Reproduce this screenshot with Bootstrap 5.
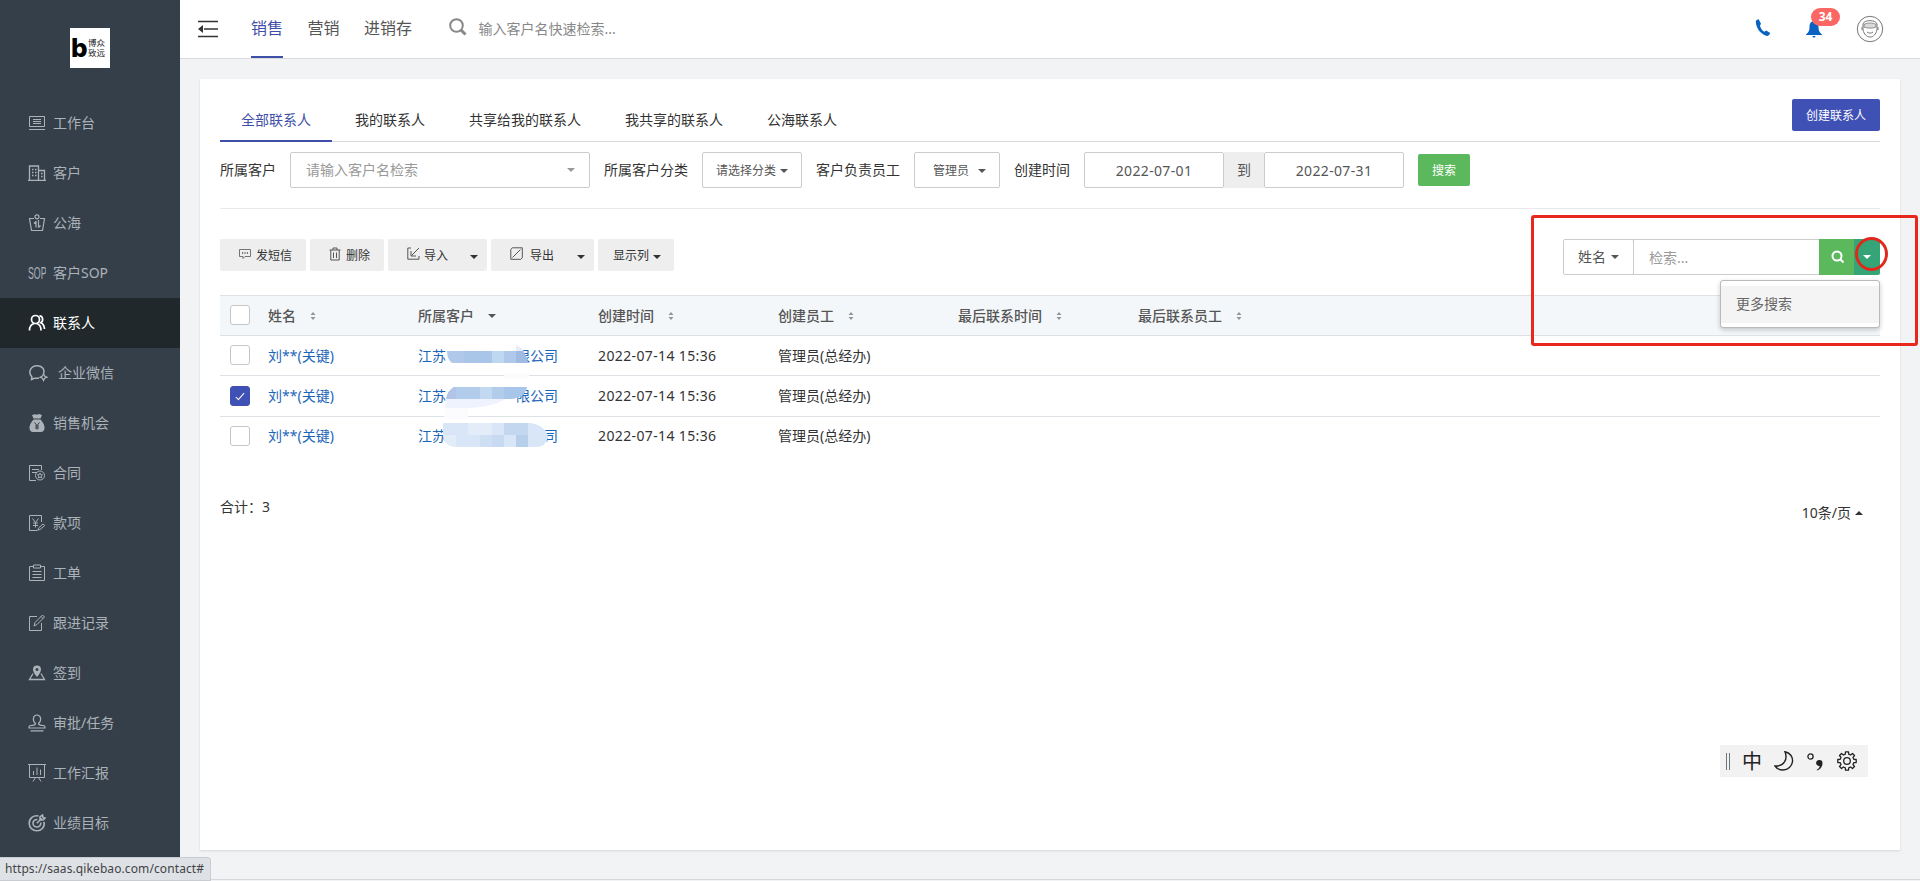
<!DOCTYPE html>
<html lang="zh-CN">
<head>
    <meta charset="UTF-8">
    <meta name="viewport" content="width=device-width, initial-scale=1.0">
    <title>联系人</title>
    <link href="https://cdn.jsdelivr.net/npm/bootstrap@5.3.2/dist/css/bootstrap.min.css" rel="stylesheet">
    <style>
        body{
            background: #f1f3f5;
            color: #333;
            font-family: "Noto Sans", "Noto Sans CJK SC", sans-serif;
            font-size: 14px;
            line-height: 20px;
            height: 881px;
            overflow: hidden;
        }
        svg{ display: block; flex: none; fill: none; stroke: currentColor; }
        .solid{ fill: currentColor; stroke: none; }
        a{ text-decoration: none; }

        /* sidebar */
        .side{ width: 180px; height: 881px; background: #353f4a; }
        .brand-box{ width: 40px; height: 40px; margin: 28px 0 30px 70px; background: #fff; color: #000; }
        .brand-b{ font: 800 26px/38px Inter, sans-serif; width: 18px; padding-left: 1px; }
        .brand-name{ font-size: 8.5px; line-height: 10px; white-space: nowrap; color: #222; }
        .side .nav-link{ height: 50px; padding: 0 0 0 28px; gap: 7px; color: #abb2b8; white-space: nowrap; }
        .side .nav-link.active{ background: #20282b; color: #fff; }
        .side .nav-link.wide-gap{ gap: 10px; }

        /* header */
        .top{ height: 59px; background: #fff; border-bottom: 1px solid #d9dcde; padding: 0 36px 0 18px; }
        .top .nav-link{ height: 58px; padding: 0; font-size: 16px; line-height: 57px; color: #555; margin-right: 24.5px; }
        .top .nav-link.active{ color: #3f4fa8; border-bottom: 2px solid #3f4fa8; }
        .top-nav{ margin-left: 17px; }
        .quick{ color: #888; }
        .blue-ico{ color: #0a63c2; }
        .phone{ margin-top: -3px; }
        .bell{ margin: 0 34px 0 35px; }
        .avatar{ color: #777; }
        .count{ left: 5px; top: -13px; width: 29px; height: 18px; border-radius: 9px; background: #fa6764; color: #fff; font-size: 12px; font-weight: 700; line-height: 18px; text-align: center; }

        /* panel */
        .panel{ margin: 20px 20px 0; width: 1700px; height: 771px; padding: 0 20px; background: #fff; box-shadow: 0 1px 2px rgba(0,0,0,.12); }
        .tabs{ height: 63px; border-bottom: 1px solid #d6d9db; }
        .tabs .nav-link{ height: 44px; padding: 0 21px; margin: 19px 2px 0 0; line-height: 43px; color: #333; border-bottom: 2px solid transparent; }
        .tabs .nav-link.active{ color: #3f4fa8; border-color: #3f4fa8; }
        .btn{ --bs-btn-font-size: 12px; --bs-btn-border-radius: 2px; height: 32px; padding: 1px 0 0; line-height: 20px; border: 0; }
        .btn-create{ width: 88px; margin-top: 20px; background: #3f51b5; color: #fff; }
        .btn-green{ width: 52px; margin: 2px 0 0 14px; background: #5cb85c; color: #fff; }
        .filters{ height: 67px; padding-top: 10px; border-bottom: 1px solid #e8eaec; }
        .filters label{ line-height: 36px; margin-right: 14px; height: 36px; }
        .box{ height: 36px; border: 1px solid #ccc; border-radius: 2px; background: #fff; display: flex; align-items: center; margin-right: 14px; color: #555; }
        .in-customer{ width: 300px; padding: 0 14px 0 15px; color: #999; }
        .in-category{ width: 100px; padding: 1px 0 0 13px; gap: 4px; font-size: 12px; }
        .in-owner{ width: 86px; padding: 1px 0 0 18px; gap: 9px; font-size: 12px; }
        .in-category .tri, .in-owner .tri{ margin-top: 1px; }
        .date-in{ width: 140px; justify-content: center; letter-spacing: .35px; margin: 0; padding-top: 1px; }
        .to{ width: 40px; height: 36px; background: #eee; color: #555; line-height: 36px; text-align: center; }
        .tri{ width: 0; height: 0; border: 4px solid transparent; border-top-color: currentColor; border-bottom: 0; }
        .tri.up{ border-bottom: 4px solid currentColor; border-top: 0; }

        .tools{ height: 86px; padding-top: 30px; gap: 4px; }
        .tools .btn-gray{ background: #eee; color: #333; display: flex; align-items: center; }
        .btn-gray svg{ color: #555; margin-top: -4px; }
        .btn-gray .tri{ margin-top: 3px; }
        .tools .w-sms{ width: 86px; padding-left: 19px; gap: 5px; }
        .tools .w-del{ width: 74px; padding-left: 19px; gap: 5px; }
        .tools .w-in{ width: 99px; padding: 1px 9px 0 19px; gap: 4px; }
        .tools .w-out{ width: 103px; padding: 1px 9px 0 19px; gap: 7px; }
        .tools .w-col{ width: 76px; padding-left: 15px; gap: 4px; }
        .search{ margin-left: auto; height: 36px; }
        .search .box{ margin: 0; }
        .search .in-field{ width: 71px; padding-left: 14px; gap: 5px; margin-right: -1px; }
        .search .in-word{ width: 186px; padding: 2px 0 0 15px; color: #999; border-right: 0; border-radius: 0; }
        .go{ width: 35px; background: #5cb85c; color: #fff; padding-left: 12px; }
        .more{ width: 26px; background: #35a577; color: #fff; border-radius: 0 2px 2px 0; padding-left: 9px; }
        .search .dropdown-menu{ display: block; right: 0; top: 41px; width: 160px; min-width: 0; padding: 5px 0 4px; font-size: 14px; border: 1px solid #bbb; border-radius: 3px; box-shadow: 0 2px 5px rgba(0,0,0,.2); }
        .search .dropdown-item{ height: 37px; padding: 0 15px; line-height: 36px; background: #f4f4f4; color: #666; }

        .list{ table-layout: fixed; width: 1660px; margin: 0; --bs-table-bg: transparent; }
        .list > :not(caption) > * > *{ padding: 0 0 0 10px; vertical-align: middle; border-bottom: 1px solid #dee2e6; color: #333; height: 40px; box-shadow: none; }
        .list > thead > tr > th{ background: #f4f7fa; border-top: 1px solid #dee2e6; color: #555; font-weight: 500; }
        .list > tbody > tr:nth-child(2) > td{ height: 41px; }
        .list > tbody > tr:last-child > td{ border: 0; height: 39px; }
        .list > tbody > tr > td a{ color: #1a66b8; white-space: nowrap; }
        .list .form-check-input{ display: block; width: 20px; height: 20px; margin: -1px 0 0; border: 1px solid #c4c7ca; border-radius: 3px; background-color: #fff; box-shadow: none; }
        .list .form-check-input:checked{ background-color: #3f51b5; border-color: #3f51b5; background-image: none; position: relative; margin: 0; }
        .list .form-check-input:checked::after{ content: ""; position: absolute; left: 7px; top: 4px; width: 4px; height: 9px; border: solid #fff; border-width: 0 1.3px 1.3px 0; transform: rotate(42deg); }
        .list .th-in{ display: flex; align-items: center; gap: 14px; }
        .list .when{ letter-spacing: .37px; }
        .hid{ display: inline-block; width: 70px; }
        .hid-long{ width: 98px; }
        .smudge{ position: absolute; left: 220px; top: 40px; stroke: none; }
        .foot{ padding-top: 41px; }
        .pager{ padding: 6px 17px 0 0; }

        /* floating things */
        .ime{ position: absolute; left: 1720px; top: 745px; width: 148px; height: 32px; background: #f2f2f2; color: #222; padding-left: 6px; }
        .ime-zh{ font-size: 20px; line-height: 30px; margin: 1px 12px 0 11px; }
        .ime-dot{ margin: 0 12px 0 13px; }
        .note{ position: absolute; left: 1531px; top: 215px; width: 387px; height: 131px; border: 3px solid #e8281c; border-radius: 3px; z-index: 1100; }
        .ring{ position: absolute; left: 1855px; top: 237px; width: 33px; height: 34px; border: 3px solid #e0281c; border-radius: 50%; z-index: 1100; }
        .status{ position: absolute; left: 0; top: 857px; width: 211px; height: 24px; background: #dee1e6; color: #444; border: 1px solid #c9ccd1; border-left: 0; border-radius: 0 4px 0 0; font-size: 12px; line-height: 22px; padding-left: 5px; letter-spacing: .1px; white-space: nowrap; }
        .edge{ position: absolute; left: 180px; right: 0; top: 879px; height: 2px; border-top: 1px solid #d5d8da; }
    </style>
</head>
<body class="d-flex position-relative">

<nav class="side flex-shrink-0">
    <div class="brand-box d-flex align-items-center">
        <div class="brand-b">b</div>
        <div class="brand-name">博众<br>致远</div>
    </div>
    <div class="nav flex-column flex-nowrap">
        <a class="nav-link d-flex align-items-center" href="#"><svg width="18" height="18"><path d="M1.500 2.500h15v10h-15zM1 15.500h16M5 5.500h8M5 7.500h8M5 9.500h8"/></svg>工作台</a>
        <a class="nav-link d-flex align-items-center" href="#"><svg width="18" height="18" stroke-width="1.300"><path d="M1.500 16V2h9V16M10.500 6.500h6V16M0 16.300h18M4 5.500h1.500M7 5.500h1.500M4 8.500h1.500M7 8.500h1.500M4 11.500h1.500M7 11.500h1.500M13 9.500h1.500M13 12.500h1.500"/></svg>客户</a>
        <a class="nav-link d-flex align-items-center" href="#"><svg width="18" height="18" stroke-width="1.200"><path d="M6 4.500H1.500l2 12h11l2-12H12"/><circle cx="9" cy="2.800" r="2"/><path d="M8 7v6.500M6 9.500l2-2M10.500 6v7.500M10.500 13.500l2-2"/></svg>公海</a>
        <a class="nav-link d-flex align-items-center" href="#"><svg width="18" height="18"><text transform="scale(.55 1)" x="0" y="14.500" font-family="Liberation Sans" font-size="16" class="solid">SOP</text></svg>客户SOP</a>
        <a class="nav-link d-flex align-items-center active" href="#"><svg width="18" height="18" stroke-width="1.700"><circle cx="7.500" cy="5.500" r="4"/><path d="M1.500 16.500c0-4 2-6.500 5-7M8.500 9.500c3 .7 4.500 3 4.500 7M11.500 1.800c3.300 0 4.500 5 1.200 7 2.500 1 3.600 3.200 3.800 6.200"/></svg>联系人</a>
        <a class="nav-link d-flex align-items-center wide-gap" href="#"><svg width="20" height="18" stroke-width="1.500"><path d="M11 14.300H6.500L3.500 15.500l.4-2.500C-.8 7.500 3.500 1.300 9.500 1.700c5 .3 7.500 4 6 8"/><path d="M15.500 9.800l1.100 2.300 2.400 1.100-2.400 1.100-1.100 2.300-1.100-2.300-2.400-1.100 2.400-1.100z" stroke-width="1.200"/></svg>企业微信</a>
        <a class="nav-link d-flex align-items-center" href="#"><svg width="18" height="20" class="solid"><path d="M4 2l3-.7 2 .5 2-.7 3 .9-1.500 3.500h-7zM5.500 6.500h7c2.500 3 4.500 6 4 9-.3 2-1.500 3.500-3.500 3.500H5c-2 0-3.200-1.500-3.500-3.500-.5-3 1.500-6 4-9z"/><path d="M6.500 9.500L9 12.500l2.500-3M9 12.500v4M7 13h4M7 15h4" stroke="#353f4a" fill="none"/></svg>销售机会</a>
        <a class="nav-link d-flex align-items-center" href="#"><svg width="18" height="18"><path d="M8 16.500H1.500v-15h12V6M4 5.500h7M4 8.500h5"/><circle cx="12" cy="11.500" r="4.500"/><path d="M12 9l.8 1.700 1.700.2-1.300 1.200.4 1.800-1.600-.9-1.600.9.400-1.800-1.300-1.200 1.700-.2z"/></svg>合同</a>
        <a class="nav-link d-flex align-items-center" href="#"><svg width="18" height="18"><path d="M9.500 16.500h-8v-15h12V8M4.500 4.500l3 4 3-4M7.500 8.500v5M5 9h5M5 11.500h5M10 16l.5-2 4.500-4 1.800 1.500-4.800 4z"/></svg>款项</a>
        <a class="nav-link d-flex align-items-center" href="#"><svg width="18" height="18"><path d="M5.500 2.500h-4v14h15v-14h-4M5.500 1h7v3h-7zM4.500 7.500h9M4.500 10.500h9M4.500 13.500h9"/></svg>工单</a>
        <a class="nav-link d-flex align-items-center" href="#"><svg width="18" height="18"><path d="M9 2.500H1.500v14h12V9M6 12l1-3.500L14.500 1l2 2L9 10.500zM13 2.500l2 2"/></svg>跟进记录</a>
        <a class="nav-link d-flex align-items-center" href="#"><svg width="18" height="18"><path d="M5 9.500L1.500 15.500h15L13 9.500" stroke-width="1.300"/><path class="solid" fill-rule="evenodd" d="M9 1.500a4 4 0 0 1 4 4c0 3-4 7.500-4 7.500S5 8.500 5 5.500a4 4 0 0 1 4-4zM9 4a1.500 1.500 0 1 0 0 3 1.500 1.500 0 0 0 0-3z"/></svg>签到</a>
        <a class="nav-link d-flex align-items-center" href="#"><svg width="18" height="18"><path d="M7.500 9.500C4 6.500 5 1 9 1s5 5.500 1.500 8.500c0 1.500 1 2 5 2 1 0 1.500 1 1.500 2.500H1c0-1.500.5-2.500 1.500-2.500 4 0 5-.5 5-2zM2.500 16.800h13" stroke-width="1.200"/></svg>审批/任务</a>
        <a class="nav-link d-flex align-items-center" href="#"><svg width="18" height="20"><path d="M0 1.500h18M1.500 1.500v13h15v-13M5.500 8v4M9 4.500V12M12.500 6.500V12M7.500 14.500l-2.500 4M10.500 14.500l2.500 4"/></svg>工作汇报</a>
        <a class="nav-link d-flex align-items-center" href="#"><svg width="18" height="18" stroke-width="1.600"><path d="M10.500 2C5.500.8 1.200 4.500 1.200 9.200c0 4.500 3.500 7.600 7.600 7.600 4.700 0 8.300-4 7.200-9"/><path d="M9.500 5.500c-2.500-.3-4.500 1.500-4.500 3.700s1.700 3.800 3.800 3.800c2.500 0 4.300-2 3.900-4.500M8.800 9.200l5-5M12 5.500V3l2.500-2 .5 2.500 2 .5-2 2h-2.500"/></svg>业绩目标</a>
    </div>
</nav>

<main class="flex-grow-1">
    <header class="top d-flex align-items-center">
        <svg width="20" height="18" stroke-width="1.500" class="me-3"><path d="M0 1.500h20M6 9h14M0 16.500h20"/><path class="solid" d="M5 5v8L0 9z"/></svg>
        <div class="nav flex-nowrap top-nav">
            <a class="nav-link active" href="#">销售</a>
            <a class="nav-link" href="#">营销</a>
            <a class="nav-link" href="#">进销存</a>
        </div>
        <div class="quick d-flex align-items-center ms-2">
            <svg width="18" height="18" stroke-width="2" class="ms-1 me-2 mb-1"><circle cx="7.500" cy="7.500" r="6.300"/><path d="M12 12l4.500 4.500" stroke-width="3"/></svg>
            <span class="ms-1">输入客户名快速检索...</span>
        </div>
        <svg width="16" height="17" class="blue-ico phone ms-auto"><path class="solid" d="M3.500 0L1 1.500C0 6 4 15 12 17c1.500-.2 2.800-1.500 3.200-3l-4-2.500-2 1.200C7 11.500 5.300 8.500 5 6.500l1-1.800z"/></svg>
        <div class="position-relative blue-ico bell">
            <svg width="16" height="17"><path class="solid" d="M8 0c3.500.5 4.500 3 4.500 6s.5 5 3.500 7.500v.5H0v-.5C3 11 3.500 9 3.500 6S4.500.5 8 0zM6.500 15h3c0 2-3 2-3 0z"/></svg>
            <span class="position-absolute count">34</span>
        </div>
        <svg width="28" height="28" class="avatar"><circle cx="14" cy="14" r="12.700"/><path d="M7 9c1-4.500 13-4.500 14 0v6c-1 4-3.500 7-7 7s-6-3-7-7z"/><path d="M8 9.500c3-2 9-2 12 0v2.500c-3 1.500-9 1.500-12 0z" fill="#d9dadb" stroke-width=".8"/><path d="M6 12v3M22 12v3M11 17c2 1.500 4 1.500 6 0"/></svg>
    </header>

    <section class="panel position-relative">
        <div class="tabs d-flex justify-content-between">
            <div class="nav flex-nowrap">
                <a class="nav-link active" href="#">全部联系人</a>
                <a class="nav-link" href="#">我的联系人</a>
                <a class="nav-link" href="#">共享给我的联系人</a>
                <a class="nav-link" href="#">我共享的联系人</a>
                <a class="nav-link" href="#">公海联系人</a>
            </div>
            <button class="btn btn-create">创建联系人</button>
        </div>

        <div class="filters d-flex">
            <label>所属客户</label>
            <div class="box in-customer justify-content-between"><span>请输入客户名检索</span><i class="tri"></i></div>
            <label>所属客户分类</label>
            <div class="box in-category"><span>请选择分类</span><i class="tri"></i></div>
            <label>客户负责员工</label>
            <div class="box in-owner"><span>管理员</span><i class="tri"></i></div>
            <label>创建时间</label>
            <div class="box date-in">2022-07-01</div>
            <div class="to">到</div>
            <div class="box date-in">2022-07-31</div>
            <button class="btn btn-green">搜索</button>
        </div>

        <div class="tools d-flex">
            <button class="btn btn-gray w-sms"><svg width="12" height="12" viewBox="0 0 12 12"><path d="M.5 1.500h11v7H6l-2 2v-2H.5z" stroke-width=".8"/><path d="M3 5h1.200M5.400 5h1.200M7.800 5H9" stroke-width="1.300"/></svg>发短信</button>
            <button class="btn btn-gray w-del"><svg width="12" height="14"><path d="M.5 3h11M4 3V1h4v2M1.800 3v10h8.400V3M4.500 5.500V11M7.500 5.500V11"/></svg>删除</button>
            <button class="btn btn-gray w-in"><svg width="13" height="13"><path d="M4 1H.8v11.200H12V9M12 1L4.500 8.500M4 4v5h5"/></svg>导入<i class="tri ms-auto"></i></button>
            <button class="btn btn-gray w-out"><svg width="13" height="13"><path d="M.8 2.500l1.500-1.700h10v10l-1.500 1.500h-10zM2.500 10.500l8-8"/></svg>导出<i class="tri ms-auto"></i></button>
            <button class="btn btn-gray w-col">显示列<i class="tri"></i></button>
            <div class="search d-flex position-relative">
                <div class="box in-field"><span>姓名</span><i class="tri"></i></div>
                <div class="box in-word">检索...</div>
                <div class="go d-flex align-items-center"><svg width="14" height="14" stroke-width="2"><circle cx="6" cy="6" r="4.500"/><path d="M9 9l3.500 3.500"/></svg></div>
                <div class="more d-flex align-items-center"><i class="tri"></i></div>
                <div class="dropdown-menu"><a class="dropdown-item" href="#">更多搜索</a></div>
            </div>
        </div>

        <div class="position-relative">
            <table class="table list">
                <colgroup><col width="38"><col width="150"><col width="180"><col width="180"><col width="180"><col width="180"><col></colgroup>
                <thead>
                <tr>
                    <th><input class="form-check-input" type="checkbox"></th>
                    <th><div class="th-in">姓名<svg width="6" height="8" class="solid" opacity=".6"><path d="M3 0l2.500 3h-5zM3 8L.5 5h5z"/></svg></div></th>
                    <th><div class="th-in">所属客户<i class="tri"></i></div></th>
                    <th><div class="th-in">创建时间<svg width="6" height="8" class="solid" opacity=".6"><path d="M3 0l2.500 3h-5zM3 8L.5 5h5z"/></svg></div></th>
                    <th><div class="th-in">创建员工<svg width="6" height="8" class="solid" opacity=".6"><path d="M3 0l2.500 3h-5zM3 8L.5 5h5z"/></svg></div></th>
                    <th><div class="th-in">最后联系时间<svg width="6" height="8" class="solid" opacity=".6"><path d="M3 0l2.500 3h-5zM3 8L.5 5h5z"/></svg></div></th>
                    <th><div class="th-in">最后联系员工<svg width="6" height="8" class="solid" opacity=".6"><path d="M3 0l2.500 3h-5zM3 8L.5 5h5z"/></svg></div></th>
                </tr>
                </thead>
                <tbody>
                <tr>
                    <td><input class="form-check-input" type="checkbox"></td>
                    <td><a href="#">刘**(关键)</a></td>
                    <td><a href="#">江苏<span class="hid"></span>限公司</a></td>
                    <td class="when">2022-07-14 15:36</td>
                    <td>管理员(总经办)</td>
                    <td></td>
                    <td></td>
                </tr>
                <tr>
                    <td><input class="form-check-input" type="checkbox" checked></td>
                    <td><a href="#">刘**(关键)</a></td>
                    <td><a href="#">江苏<span class="hid"></span>限公司</a></td>
                    <td class="when">2022-07-14 15:36</td>
                    <td>管理员(总经办)</td>
                    <td></td>
                    <td></td>
                </tr>
                <tr>
                    <td><input class="form-check-input" type="checkbox"></td>
                    <td><a href="#">刘**(关键)</a></td>
                    <td><a href="#">江苏<span class="hid hid-long"></span>司</a></td>
                    <td class="when">2022-07-14 15:36</td>
                    <td>管理员(总经办)</td>
                    <td></td>
                    <td></td>
                </tr>
                </tbody>
            </table>
            <!-- blurred-out part of the company names -->
            <svg class="smudge" width="112" height="116">
                <clipPath id="c1"><path d="M7 16h76q4 6 5 12H12q-5-4-5-12z"/></clipPath>
                <clipPath id="c2"><path d="M14 52h73q-2 10-16 12H6q2-9 8-12z"/></clipPath>
                <clipPath id="c3"><path d="M3 88h88q15 3 17 14-2 10-12 10H15Q3 110 3 98z"/></clipPath>
                <path d="M64 38h25v6H64zM5 70h23v14H4z" fill="#fcfcff"/>
                <path d="M76 10q8 3 8 8h-8z" fill="#e8eef9"/>
                <path d="M6 64h60q-14 8-36 9H5z" fill="#eef3fd"/>
                <g clip-path="url(#c1)"><path d="M0 16h110v12H0z" fill="#b0c8e9"/><path d="M24 16h28v12H24z" fill="#a9c5e8"/><path d="M52 16h12v12H52z" fill="#bfd8f1"/><path d="M76 16h14v12H76z" fill="#9fbbe2"/></g>
                <g clip-path="url(#c2)"><path d="M0 52h110v12H0z" fill="#b2cdec"/><path d="M4 52h12v12H4z" fill="#b1c4e8"/><path d="M40 52h12v12H40z" fill="#c2d9f1"/><path d="M64 52h26v12H64z" fill="#a8c6ea"/></g>
                <g clip-path="url(#c3)"><path d="M0 88h110v24H0z" fill="#d9e6f7"/><path d="M28 88h24v12H28zM3 100h13v12H3z" fill="#e2edf9"/><path d="M52 100h12v12H52z" fill="#c8daf2"/><path d="M64 88h24v12H64z" fill="#c3d7ee"/><path d="M76 100h12v12H76z" fill="#b8cfea"/><path d="M40 100h12v12H40z" fill="#cfdff3"/></g>
            </svg>
        </div>

        <div class="foot d-flex justify-content-between">
            <div>合计：3</div>
            <div class="pager d-flex align-items-center">10条/页<i class="tri up ms-1"></i></div>
        </div>
    </section>
</main>

<div class="edge"></div>
<div class="status">https://saas.qikebao.com/contact#</div>

<div class="ime d-flex align-items-center">
    <svg width="5" height="17" class="text-secondary"><path d="M.5 0v17M3.500 0v17"/></svg>
    <span class="ime-zh">中</span>
    <svg width="20" height="20" stroke-width="1.400"><path d="M11 .8c5 1 8 5 7.500 9.500-.5 5-4.500 8.700-9.500 8.700-3.500 0-6.500-1.700-8-4 9 .5 13-6.500 10-14.200z"/></svg>
    <svg width="18" height="20" class="ime-dot"><circle cx="3.500" cy="5.500" r="2.600" stroke-width="1.300"/><path class="solid" d="M12.500 9a3 3 0 0 1 3 3c0 4-2.500 6.500-5.500 7.500l-.3-.8c1.800-1 2.800-2.200 3-3.800a3 3 0 1 1-.2-5.900z"/></svg>
    <svg width="20" height="20" stroke-width="1.300" stroke-linejoin="round"><circle cx="10" cy="10" r="3.300"/><path d="M19.200 8.500v3l-2.400.2-.8 1.900 1.500 1.900-2 2-1.900-1.500-1.900.8-.2 2.400h-3l-.2-2.400-1.900-.8-1.900 1.500-2-2L4 13.600l-.8-1.900-2.400-.2v-3l2.400-.2.8-1.900-1.500-1.900 2-2L6.400 4l1.900-.8.2-2.400h3l.2 2.400 1.900.8 1.900-1.500 2 2L16 6.400l.8 1.900z"/></svg>
</div>

<div class="note"></div>
<div class="ring"></div>
</body>
<script src="https://cdn.jsdelivr.net/npm/bootstrap@5.3.2/dist/js/bootstrap.bundle.min.js"></script>
</html>
